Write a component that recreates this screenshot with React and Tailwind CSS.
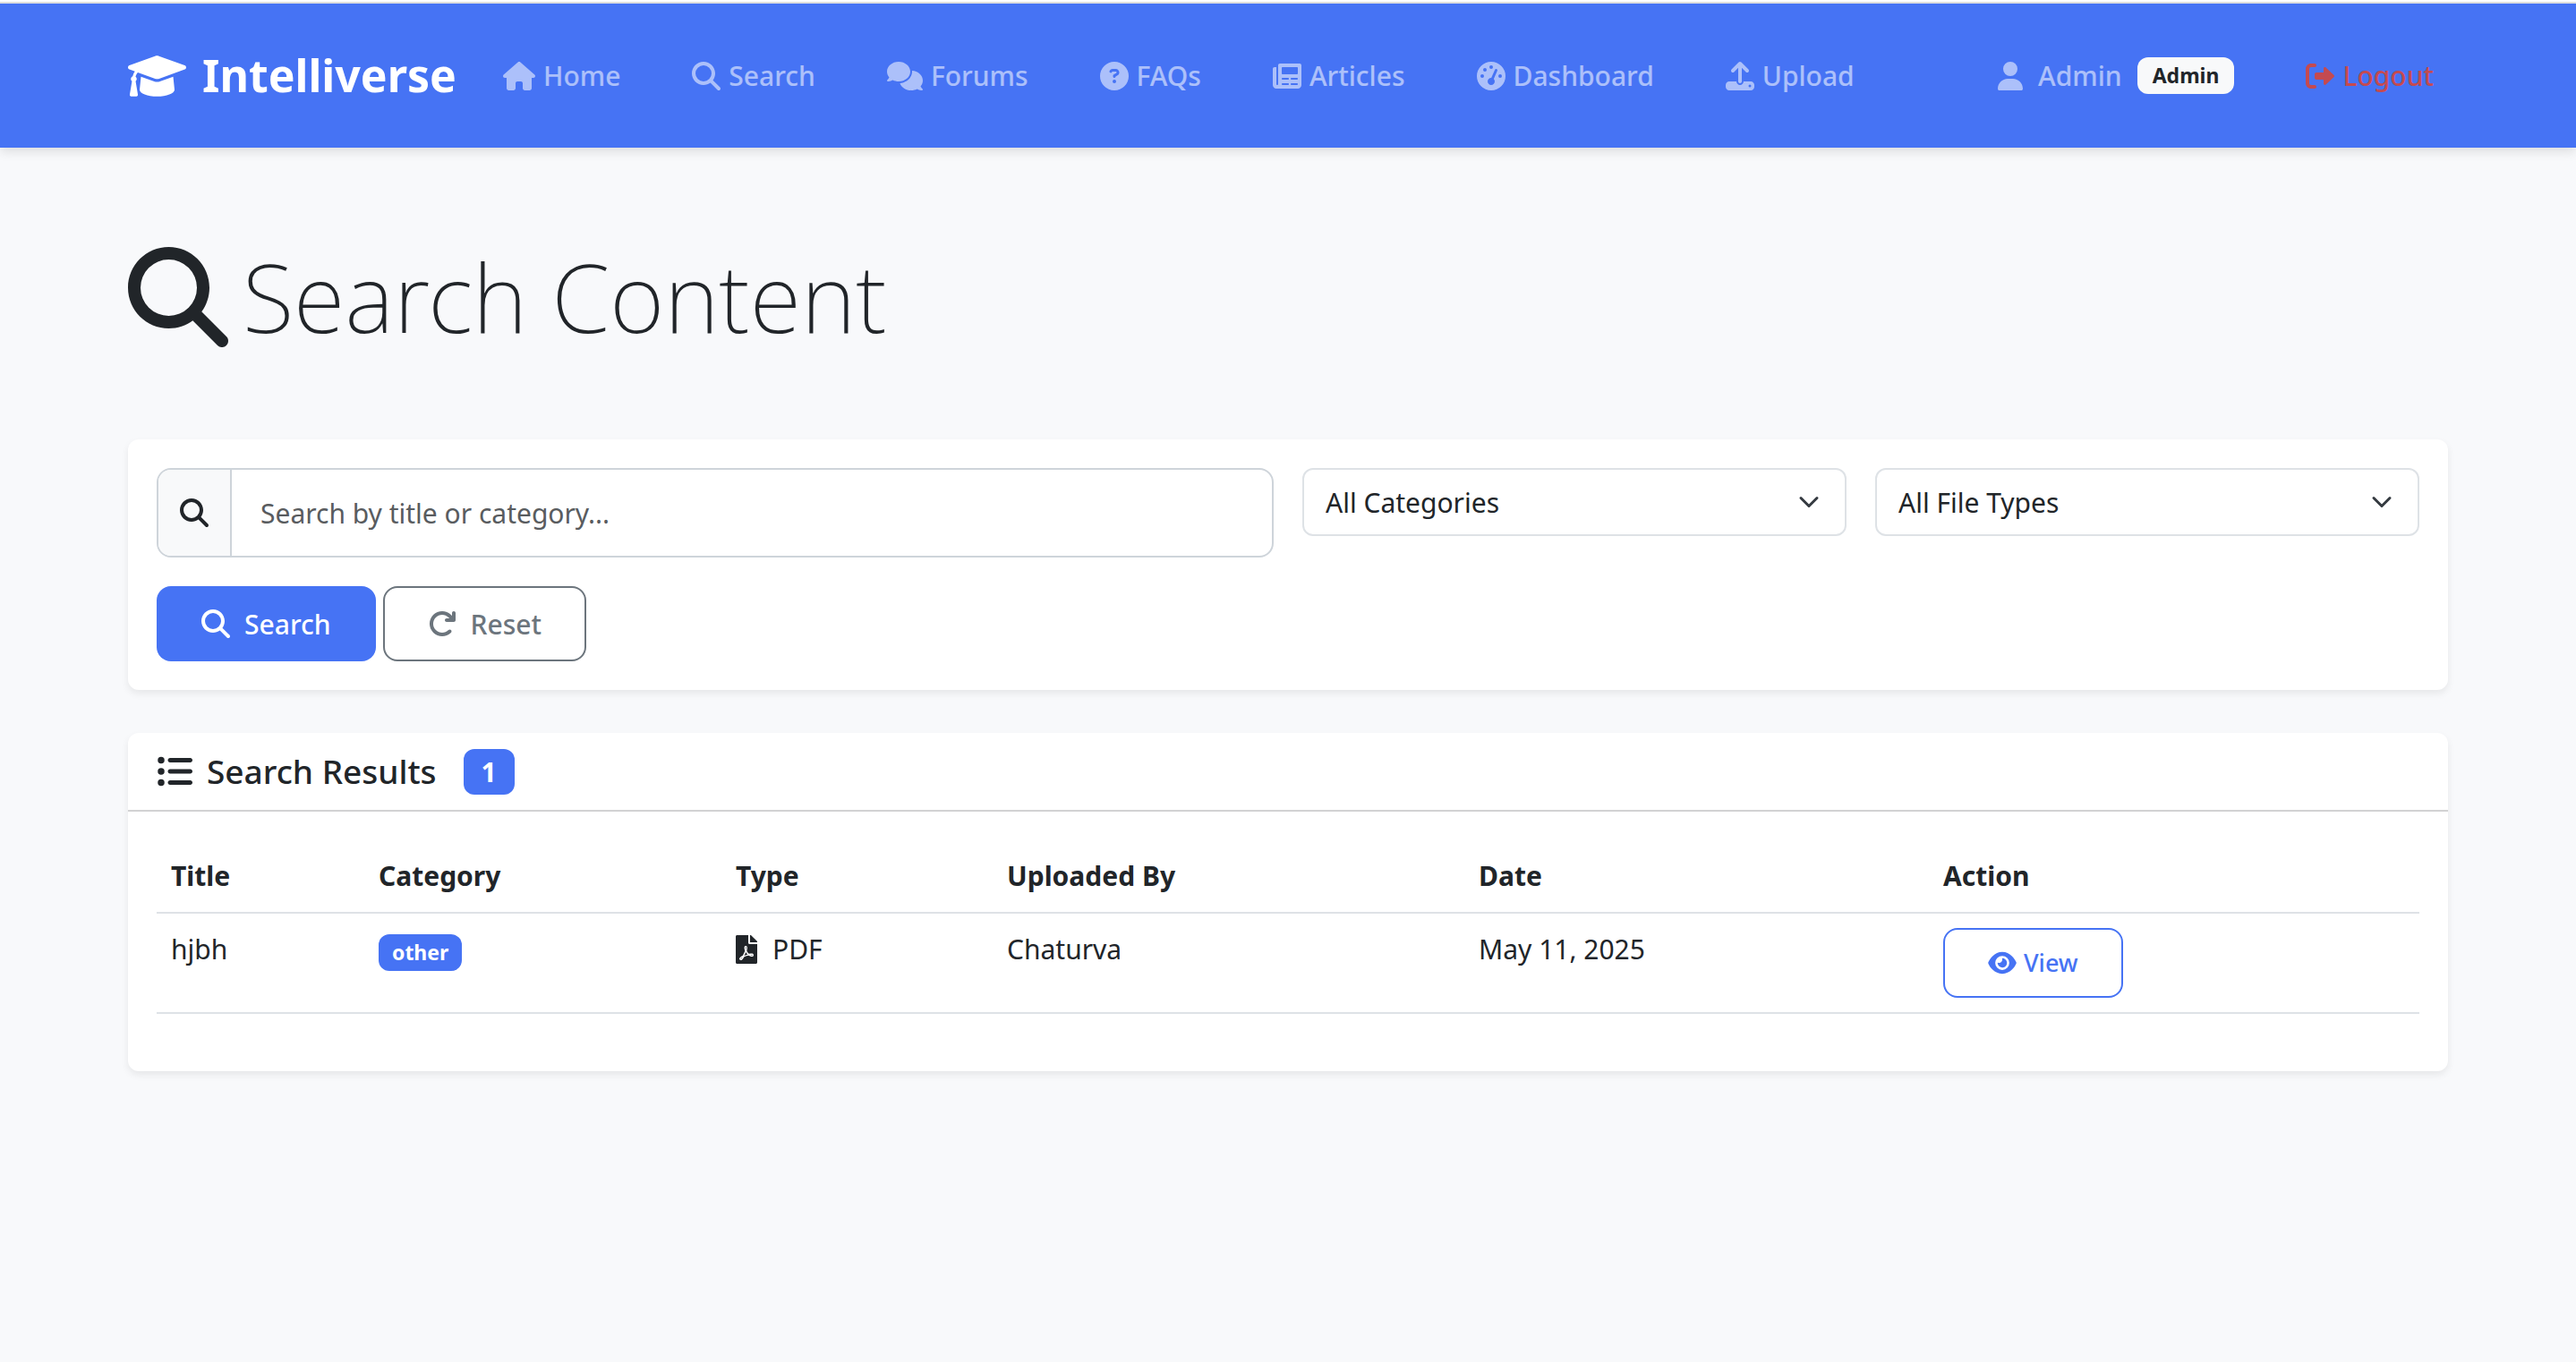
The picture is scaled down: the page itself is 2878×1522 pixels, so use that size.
import React from "react";
import {
  FaHouse, FaMagnifyingGlass, FaComments, FaCircleQuestion,
  FaGaugeHigh, FaUpload, FaUser, FaArrowRotateRight, FaListUl, FaEye,
} from "react-icons/fa6";
import { FaFilePdf } from "react-icons/fa";

function GraduationCap({ className }) {
  return (
    <svg viewBox="0 0 640 512" fill="currentColor" className={className} aria-hidden="true">
      <path d="M623.1 136.9l-282.7-101.2c-13.73-4.91-29.7-4.91-43.4 0L16.05 136.9C6.438 140.4 0 149.6 0 160s6.438 19.65 16.05 23.09L76.07 204.6c-11.89 15.8-20.26 34.16-24.55 53.95C40.05 263.4 32 274.8 32 288c0 9.953 4.814 18.49 11.94 24.36l-24.83 149C17.48 471.1 25 480 34.89 480H93.11c9.887 0 17.41-8.879 15.78-18.63l-24.83-149C91.19 306.5 96 297.1 96 288c0-10.29-5.174-19.03-12.72-24.89c4.252-17.76 12.88-33.82 24.94-47.03l190.6 68.23c13.73 4.91 29.7 4.91 43.4 0l282.7-101.2C633.6 179.6 640 170.4 640 160S633.6 140.4 623.1 136.9zM351.1 314.4C341.7 318.5 330.9 320 320 320c-10.92 0-21.69-1.867-32-5.555L142.8 262.5L128 405.3C128 446.6 213.1 480 320 480c105.1 0 192-33.4 192-74.67l-14.78-142.9L351.1 314.4z" />
    </svg>
  );
}

function Newspaper({ className }) {
  return (
    <svg viewBox="0 0 512 512" fill="currentColor" className={className} aria-hidden="true">
      <path d="M480 32H128C110.3 32 96 46.33 96 64v336C96 408.8 88.84 416 80 416S64 408.8 64 400V96H32C14.33 96 0 110.3 0 128v288c0 35.35 28.65 64 64 64h384c35.35 0 64-28.65 64-64V64C512 46.33 497.7 32 480 32zM272 416h-96C167.2 416 160 408.8 160 400C160 391.2 167.2 384 176 384h96c8.836 0 16 7.162 16 16C288 408.8 280.8 416 272 416zM272 320h-96C167.2 320 160 312.8 160 304C160 295.2 167.2 288 176 288h96C280.8 288 288 295.2 288 304C288 312.8 280.8 320 272 320zM432 416h-96c-8.836 0-16-7.164-16-16c0-8.838 7.164-16 16-16h96c8.836 0 16 7.162 16 16C448 408.8 440.8 416 432 416zM432 320h-96C327.2 320 320 312.8 320 304C320 295.2 327.2 288 336 288h96C440.8 288 448 295.2 448 304C448 312.8 440.8 320 432 320zM448 208C448 216.8 440.8 224 432 224h-256C167.2 224 160 216.8 160 208v-96C160 103.2 167.2 96 176 96h256C440.8 96 448 103.2 448 112V208z" />
    </svg>
  );
}

function SignOut({ className }) {
  return (
    <svg viewBox="0 0 512 512" fill="currentColor" className={className} aria-hidden="true">
      <path d="M96 480h64C177.7 480 192 465.7 192 448S177.7 416 160 416H96c-17.67 0-32-14.33-32-32V128c0-17.67 14.33-32 32-32h64C177.7 96 192 81.67 192 64S177.7 32 160 32H96C42.98 32 0 74.98 0 128v256C0 437 42.98 480 96 480zM504.8 238.5l-144.1-136c-6.975-6.578-17.2-8.375-26-4.594c-8.803 3.797-14.51 12.47-14.51 22.05l-.0918 72l-128-.001c-17.69 0-32.02 14.33-32.02 32v64c0 17.67 14.34 32 32.02 32l128 .001l.0918 71.1c0 9.578 5.707 18.25 14.51 22.05c8.803 3.781 19.03 1.984 26-4.594l144.1-136C514.4 264.4 514.4 247.6 504.8 238.5z" />
    </svg>
  );
}

const links = [
  [FaHouse, "Home", "h-8 w-9"],
  [FaMagnifyingGlass, "Search", "size-8"],
  [FaComments, "Forums", "h-8 w-10"],
  [FaCircleQuestion, "FAQs", "size-8"],
  [Newspaper, "Articles", "size-8"],
  [FaGaugeHigh, "Dashboard", "size-8"],
  [FaUpload, "Upload", "size-8"],
];

function Navbar() {
  return (
    <header className="border-t-2 border-white bg-white shadow-[0_4px_12px_rgba(0,0,0,0.12)]">
      <nav className="border-t-2 border-[#dedede] bg-[#4673f4]">
        <div className="mx-auto flex h-[161px] max-w-[2640px] items-center px-6 text-[30px] font-medium text-white/55">
          <a href="#" className="mr-[52px] flex items-center gap-[18px] text-[50px] font-bold text-white">
            <GraduationCap className="h-[52px] w-[65px]" />
            Intelliverse
          </a>
          <ul className="flex items-center gap-20">
            {links.map(([Icon, label, size]) => (
              <li key={label}>
                <a href="#" className="flex items-center gap-[9px]">
                  <Icon className={size} />
                  {label}
                </a>
              </li>
            ))}
          </ul>
          <div className="ml-auto flex items-center gap-20 pr-4">
            <a href="#" className="flex items-center gap-[17px]">
              <FaUser className="h-8 w-7" />
              Admin
              <span className="rounded-xl bg-[#f8f9fa] px-[17px] py-2 text-[23px] leading-[25px] font-bold text-[#212529]">Admin</span>
            </a>
            <a href="#" className="flex items-center gap-[9px] text-[#c44a50]">
              <SignOut className="size-8" />
              Logout
            </a>
          </div>
        </div>
      </nav>
    </header>
  );
}

function Select({ label }) {
  return (
    <div className="relative self-start">
      <select aria-label={label} className="block h-[76px] w-full appearance-none rounded-xl border-2 border-[#dee2e6] bg-white px-6 text-[30px] text-[#212529]">
        <option>{label}</option>
      </select>
      <svg viewBox="0 0 16 16" className="pointer-events-none absolute top-[26px] right-[30px] size-6" fill="none" stroke="#343a40" strokeWidth="2" strokeLinecap="round" strokeLinejoin="round">
        <path d="m2 5 6 6 6-6" />
      </svg>
    </div>
  );
}

function SearchForm() {
  return (
    <form className="grid grid-cols-4 gap-8 rounded-xl bg-white p-8 shadow-[0_4px_8px_rgba(0,0,0,0.075)]">
      <div className="col-span-2 flex h-[100px] overflow-hidden rounded-2xl border-2 border-[#ced4da]">
        <label htmlFor="query" aria-label="Search by title or category" className="flex items-center border-r-2 border-[#ced4da] bg-[#f8f9fa] px-6">
          <FaMagnifyingGlass className="size-8" />
        </label>
        <input id="query" type="text" placeholder="Search by title or category..." className="min-w-0 flex-1 px-8 text-[30px] placeholder:text-[#595c5f]" />
      </div>
      <Select label="All Categories" />
      <Select label="All File Types" />
      <div className="col-span-4 flex gap-2 text-[30px] font-medium">
        <button type="button" className="flex h-[84px] items-center gap-4 rounded-2xl bg-[#4673f4] px-[50px] text-white">
          <FaMagnifyingGlass className="size-8" />
          Search
        </button>
        <button type="reset" className="flex h-[84px] items-center gap-4 rounded-2xl border-2 border-[#6c757d] px-12 text-[#6c757d]">
          <FaArrowRotateRight className="size-8" />
          Reset
        </button>
      </div>
    </form>
  );
}

function Results() {
  return (
    <section className="mt-12 rounded-xl bg-white shadow-[0_4px_8px_rgba(0,0,0,0.075)]">
      <div className="flex h-[88px] items-center border-b-2 border-[#d2d2d3] px-8">
        <FaListUl className="mr-4 size-10" />
        <h2 className="text-[37px] font-medium">Search Results</h2>
        <span className="ml-[30px] rounded-xl bg-[#4673f4] px-5 py-[10px] text-[30px] leading-[31px] font-bold text-white">1</span>
      </div>
      <div className="px-8 pt-8 pb-16">
        <table className="w-full text-left text-[30px] leading-[48px]">
          <thead>
            <tr className="border-b-2 border-[#dee2e6] [&>th]:p-4">
              <th className="w-[232px]">Title</th>
              <th className="w-[399px]">Category</th>
              <th className="w-[303px]">Type</th>
              <th className="w-[527px]">Uploaded By</th>
              <th className="w-[519px]">Date</th>
              <th className="w-[548px]">Action</th>
            </tr>
          </thead>
          <tbody>
            <tr className="border-b-2 border-[#dee2e6] align-top [&>td]:p-4">
              <td>hjbh</td>
              <td>
                <div className="flex h-[54px] items-center">
                  <span className="rounded-xl bg-[#4673f4] px-[15px] py-2 text-[23px] leading-[25px] font-bold text-white">other</span>
                </div>
              </td>
              <td>
                <div className="flex items-center gap-[17px]">
                  <FaFilePdf className="h-8 w-6" />
                  PDF
                </div>
              </td>
              <td>Chaturva</td>
              <td>May 11, 2025</td>
              <td>
                <button type="button" className="flex h-[78px] items-center gap-2 rounded-2xl border-2 border-[#4673f4] px-12 text-[27px] font-medium text-[#4673f4]">
                  <FaEye className="h-7 w-8" />
                  View
                </button>
              </td>
            </tr>
          </tbody>
        </table>
      </div>
    </section>
  );
}

export default function App() {
  return (
    <div className="min-h-screen bg-[#f8f9fb] font-['Noto_Sans','Open_Sans',sans-serif] text-[#212529]">
      <Navbar />
      <main className="mx-auto max-w-[2640px] px-6 pt-[100px] pb-24">
        <h1 className="mb-[92px] flex h-[134px] items-center gap-4 text-[105px] leading-[134px] font-extralight">
          <FaMagnifyingGlass className="size-28" />
          Search Content
        </h1>
        <SearchForm />
        <Results />
      </main>
    </div>
  );
}
